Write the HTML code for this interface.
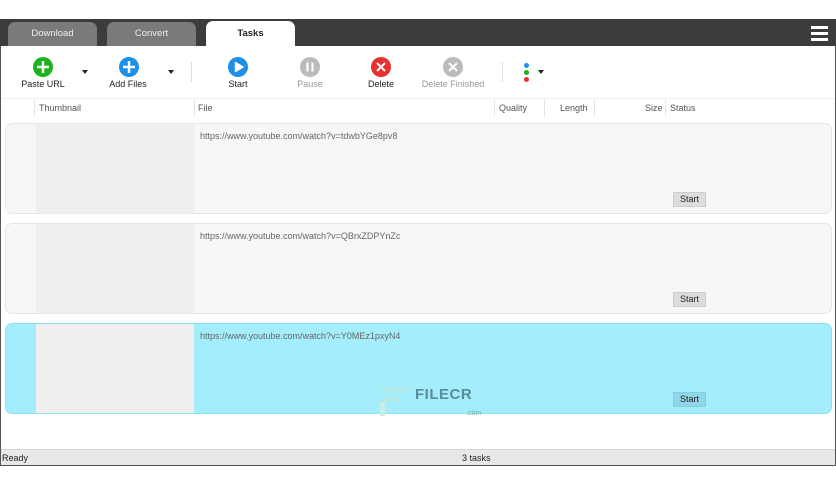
<!DOCTYPE html>
<html><head><style>
*{margin:0;padding:0;box-sizing:border-box}
body{width:836px;height:484px;background:#fff;font-family:"Liberation Sans",sans-serif;font-size:9px;color:#222;position:relative;overflow:hidden}
.a{position:absolute}
.win{left:0;top:19px;width:836px;height:447px;border:1px solid #555;border-top:none;background:#fff}
.title{left:0;top:19px;width:836px;height:27px;background:#3c3c3c}
.tab{top:22px;width:89px;height:24px;background:#7a7a7a;border-radius:7px 7px 0 0;color:#eee;text-align:center;line-height:24px;font-size:9.5px}
.tabs{background:#fff;color:#222;font-weight:bold;top:21px;height:25px}
.ham{left:811px;width:17px;height:3px;background:#fff}
.ic{width:20px;height:20px;border-radius:50%;top:57px}
.lbl{top:79px;font-size:9px;text-align:center;width:80px}
.dd{width:0;height:0;border-left:3.5px solid transparent;border-right:3.5px solid transparent;border-top:4px solid #222;top:70px}
.hd{top:103px;color:#555;font-size:9px}
.sep{top:100px;width:1px;height:16px;background:#e3e3e3}
.row{left:5px;width:827px;height:91px;border:1px solid #e6e6e6;border-radius:7px;background:#f7f7f7;overflow:hidden}
.th{position:absolute;left:30px;top:0;width:158px;height:100%;background:#efefef}
.url{position:absolute;left:194px;top:7px;color:#666;font-size:9px}
.btn{position:absolute;left:667px;top:68px;width:33px;height:15px;background:#ddd;border:1px solid #ccc;font-size:9px;text-align:center;line-height:13px;color:#222}
</style></head><body>
<div class="a win"></div>
<div class="a title"></div>
<div class="a tab" style="left:8px">Download</div>
<div class="a tab" style="left:107px">Convert</div>
<div class="a tab tabs" style="left:206px;line-height:25px">Tasks</div>
<div class="a ham" style="top:26px"></div><div class="a ham" style="top:32px"></div><div class="a ham" style="top:38px"></div>

<div class="a ic" style="left:33px;background:#1db31d"><svg width="20" height="20"><path d="M10 4v12M4 10h12" stroke="#fff" stroke-width="2.4"/></svg></div>
<div class="a lbl" style="left:3px">Paste URL</div>
<div class="a dd" style="left:82px"></div>
<div class="a ic" style="left:119px;background:#1e90e8"><svg width="20" height="20"><path d="M10 4v12M4 10h12" stroke="#fff" stroke-width="2.4"/></svg></div>
<div class="a lbl" style="left:88px">Add Files</div>
<div class="a dd" style="left:168px"></div>
<div class="a" style="left:191px;top:62px;width:1px;height:20px;background:#ddd"></div>
<div class="a ic" style="left:228px;background:#1e90e8"><svg width="20" height="20"><path d="M7.5 5.5L15 10L7.5 14.5Z" fill="#fff" stroke="#fff" stroke-width="1.5" stroke-linejoin="round"/></svg></div>
<div class="a lbl" style="left:198px">Start</div>
<div class="a ic" style="left:300px;background:#bbb"><svg width="20" height="20"><path d="M7.5 5.5v9M12.5 5.5v9" stroke="#fff" stroke-width="2.2"/></svg></div>
<div class="a lbl" style="left:270px;color:#999">Pause</div>
<div class="a ic" style="left:371px;background:#e8302e"><svg width="20" height="20"><path d="M6 6l8 8M14 6l-8 8" stroke="#fff" stroke-width="2"/></svg></div>
<div class="a lbl" style="left:341px">Delete</div>
<div class="a ic" style="left:443px;background:#bbb"><svg width="20" height="20"><path d="M6 6l8 8M14 6l-8 8" stroke="#fff" stroke-width="2"/></svg></div>
<div class="a lbl" style="left:413px;color:#999">Delete Finished</div>
<div class="a" style="left:502px;top:62px;width:1px;height:20px;background:#ddd"></div>
<div class="a" style="left:524px;top:63px;width:5px;height:5px;border-radius:50%;background:#1e90e8"></div>
<div class="a" style="left:524px;top:70px;width:5px;height:5px;border-radius:50%;background:#1db31d"></div>
<div class="a" style="left:524px;top:77px;width:5px;height:5px;border-radius:50%;background:#e8302e"></div>
<div class="a dd" style="left:538px;top:70px"></div>

<div class="a" style="left:1px;top:98px;width:834px;height:1px;background:#eee"></div>
<div class="a sep" style="left:34px"></div>
<div class="a hd" style="left:39px">Thumbnail</div>
<div class="a sep" style="left:194px"></div>
<div class="a hd" style="left:198px">File</div>
<div class="a sep" style="left:494px"></div>
<div class="a hd" style="left:499px">Quality</div>
<div class="a sep" style="left:544px"></div>
<div class="a hd" style="left:560px">Length</div>
<div class="a sep" style="left:594px"></div>
<div class="a hd" style="left:645px">Size</div>
<div class="a sep" style="left:665px"></div>
<div class="a hd" style="left:670px">Status</div>

<div class="a row" style="top:123px"><div class="th"></div><div class="url">https://www.youtube.com/watch?v=tdwbYGe8pv8</div><div class="btn">Start</div></div>
<div class="a row" style="top:223px"><div class="th"></div><div class="url">https://www.youtube.com/watch?v=QBrxZDPYnZc</div><div class="btn">Start</div></div>
<div class="a row" style="top:323px;background:#a3edfc;border-color:#8fe0f5"><div class="th"></div><div class="url">https://www.youtube.com/watch?v=Y0MEz1pxyN4</div><div class="btn" style="background:#8fd7e8;border-color:#85cde0">Start</div></div>
<div class="a" style="left:381px;top:388px;width:26px;height:4px;background:#b4e8e0"></div>
<div class="a" style="left:381px;top:398px;width:20px;height:4px;background:#b4e8e0"></div>
<div class="a" style="left:380px;top:402px;width:5px;height:14px;background:#c4eee6"></div>
<div class="a" style="left:415px;top:386px;font-size:15px;font-weight:bold;color:#5a8d99;letter-spacing:0.5px">FILECR</div>
<div class="a" style="left:466px;top:410px;font-size:7px;color:#7aa">.com</div>

<div class="a" style="left:1px;top:449px;width:834px;height:16px;background:#e8e8e8;border-top:1px solid #d6d6d6"></div>
<div class="a" style="left:2px;top:453px;font-size:9px">Ready</div>
<div class="a" style="left:462px;top:453px;font-size:9px">3 tasks</div>
</body></html>
